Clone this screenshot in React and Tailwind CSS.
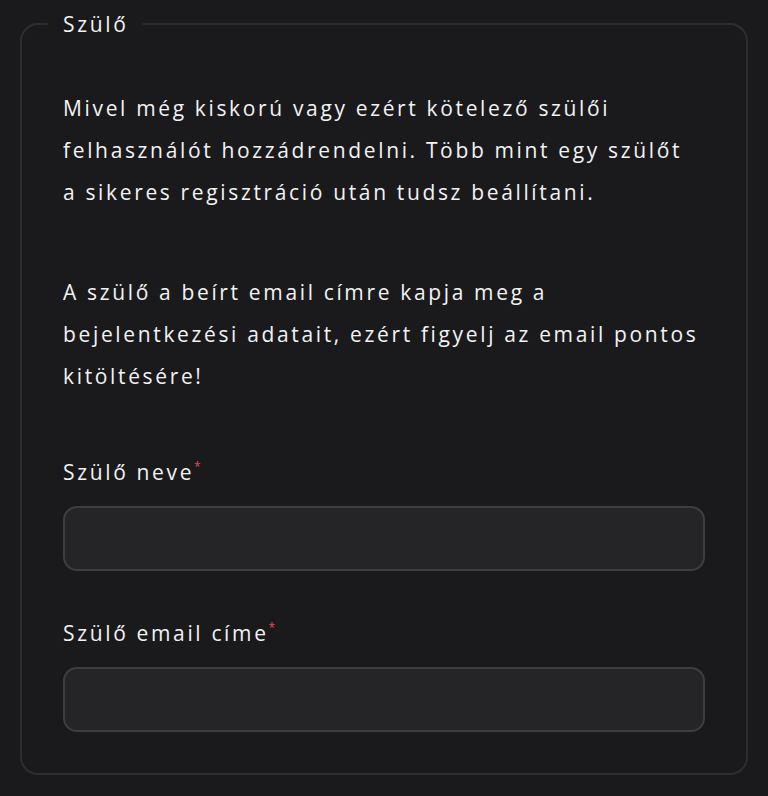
import React from 'react';

const Field = ({ label, type = 'text' }) => (
    <div className="flex flex-col">
        <label className="text-[21px] leading-[28px] text-[#f2f2f2]">
            {label}
            <span className="relative -top-[9px] text-[12px] leading-none text-[#e5484d]">*</span>
        </label>
        <input
            type={type}
            className="mt-[20px] h-[65px] w-full rounded-[14px] border-2 border-[#3e3e41] bg-[#252527] px-4 text-white outline-none"
        />
    </div>
);

const App = () => {
    return (
        <div
            className="min-h-[796px] bg-[#1a1a1c] px-[20px] pt-[10px] tracking-[2.65px]"
            style={{ fontFamily: '"Open Sans", "Noto Sans", sans-serif' }}
        >
            <fieldset className="rounded-[18px] border-2 border-[#2e2e31] px-[41px] pb-[41px]">
                <legend className="-ml-[15px] px-[15px] text-[21px] leading-[28px] text-[#f2f2f2]">Szülő</legend>

                <div className="mt-[49px] pr-[4px] text-[21px] leading-[42px] text-[#f2f2f2]">
                    <p>
                        Mivel még kiskorú vagy ezért kötelező szülői felhasználót hozzádrendelni. Több mint egy
                        szülőt a sikeres regisztráció után tudsz beállítani.
                    </p>
                    <p className="mt-[58px]">
                        A szülő a beírt email címre kapja meg a bejelentkezési adatait, ezért figyelj az email
                        pontos kitöltésére!
                    </p>
                </div>

                <div className="mt-[61px] flex flex-col gap-[48px]">
                    <Field label="Szülő neve" />
                    <Field label="Szülő email címe" type="email" />
                </div>
            </fieldset>
        </div>
    );
};

export default App;
